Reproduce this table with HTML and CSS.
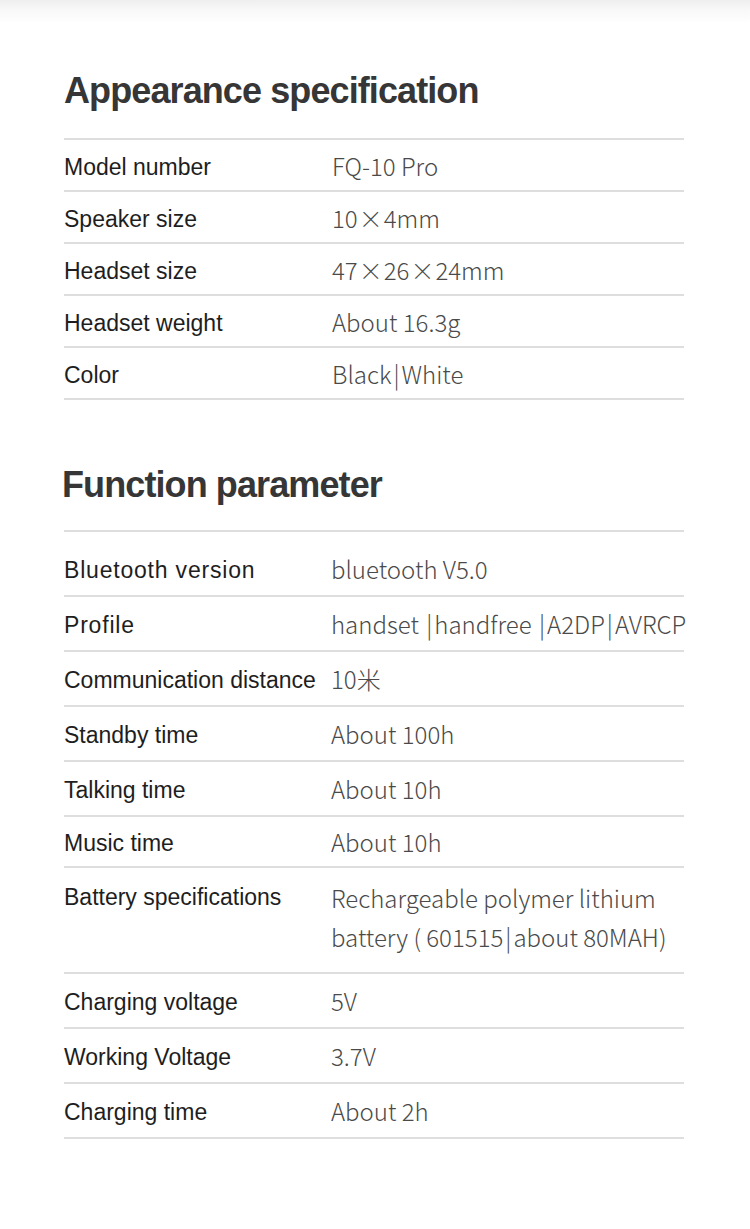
FILE: index.html
```html
<!DOCTYPE html>
<html lang="en">
<head>
<meta charset="utf-8">
<title>Specifications</title>
<link rel="stylesheet" href="styles.css">
</head>
<body>
<div class="top-fade"></div>
<main class="page">
  <section class="spec spec-appearance">
    <h2 class="spec-title">Appearance specification</h2>
    <div class="spec-table">
      <div class="row"><div class="label">Model number</div><div class="value">FQ-10 Pro</div></div>
      <div class="row"><div class="label">Speaker size</div><div class="value">10<span class="times">×</span>4mm</div></div>
      <div class="row"><div class="label">Headset size</div><div class="value">47<span class="times">×</span>26<span class="times">×</span>24mm</div></div>
      <div class="row"><div class="label">Headset weight</div><div class="value">About 16.3g</div></div>
      <div class="row"><div class="label">Color</div><div class="value">Black<span class="bar">|</span>White</div></div>
    </div>
  </section>

  <section class="spec spec-function">
    <h2 class="spec-title spec-title-2">Function parameter</h2>
    <div class="spec-table table-2">
      <div class="row row-first"><div class="label label-wide">Bluetooth version</div><div class="value">bluetooth V5.0</div></div>
      <div class="row"><div class="label label-wide">Profile</div><div class="value nowrap">handset <span class="bar">|</span>handfree <span class="bar">|</span>A2DP<span class="bar">|</span>AVRCP</div></div>
      <div class="row"><div class="label">Communication distance</div><div class="value">10米</div></div>
      <div class="row"><div class="label">Standby time</div><div class="value">About 100h</div></div>
      <div class="row"><div class="label">Talking time</div><div class="value">About 10h</div></div>
      <div class="row row-short"><div class="label">Music time</div><div class="value">About 10h</div></div>
      <div class="row row-multi"><div class="label">Battery specifications</div><div class="value">Rechargeable polymer lithium<br>battery ( 601515<span class="bar">|</span>about 80MAH)</div></div>
      <div class="row"><div class="label">Charging voltage</div><div class="value">5V</div></div>
      <div class="row"><div class="label">Working Voltage</div><div class="value">3.7V</div></div>
      <div class="row"><div class="label">Charging time</div><div class="value">About 2h</div></div>
    </div>
  </section>
</main>
</body>
</html>
```

FILE: styles.css
```css
* { box-sizing: border-box; }

html, body {
  margin: 0;
  padding: 0;
  background: #ffffff;
}

body {
  font-family: "Liberation Sans", Arial, sans-serif;
  color: #222;
  width: 750px;
  min-height: 1229px;
  overflow: hidden;
}

.top-fade {
  height: 24px;
  background: linear-gradient(to bottom, #efefef 0%, #f9f9f9 45%, #ffffff 100%);
}

.page {
  padding: 0 66px 0 64px;
}

.spec-title {
  margin: 46px 0 26px 0;
  font-size: 36px;
  line-height: 42px;
  font-weight: 700;
  letter-spacing: -0.9px;
  color: #363636;
}

.spec-title-2 {
  margin: 64px 0 24px -2px;
}

.spec-table {
  border-bottom: 2px solid #dedede;
}

.row {
  display: grid;
  grid-template-columns: 268px 1fr;
  align-items: center;
  min-height: 52px;
  border-top: 2px solid #dedede;
}

.table-2 .row {
  min-height: 55px;
  grid-template-columns: 267px 1fr;
}

.table-2 .row.row-first {
  min-height: 65px;
  padding-top: 10px;
}

.table-2 .row.row-short {
  min-height: 51px;
}

.table-2 .row.row-multi {
  align-items: start;
  min-height: 106px;
  padding: 10px 0 16px 0;
}

.row-multi .label,
.row-multi .value {
  line-height: 39px;
}

.row-multi .label {
  padding-top: 0;
}

.label {
  font-size: 23px;
  line-height: 28px;
  padding-top: 3px;
  color: #1e1e1e;
  white-space: nowrap;
}

.label-wide {
  letter-spacing: 0.8px;
}

.value {
  font-family: "Noto Sans CJK SC Light", "Noto Sans CJK SC", "Noto Sans", sans-serif;
  font-weight: 300;
  font-size: 24px;
  color: #4a4a4a;
  white-space: nowrap;
}

.nowrap {
  white-space: nowrap;
}

.times {
  display: inline-block;
  margin: 0 1px;
}

.bar {
  display: inline-block;
  margin: 0 2px;
}
```
